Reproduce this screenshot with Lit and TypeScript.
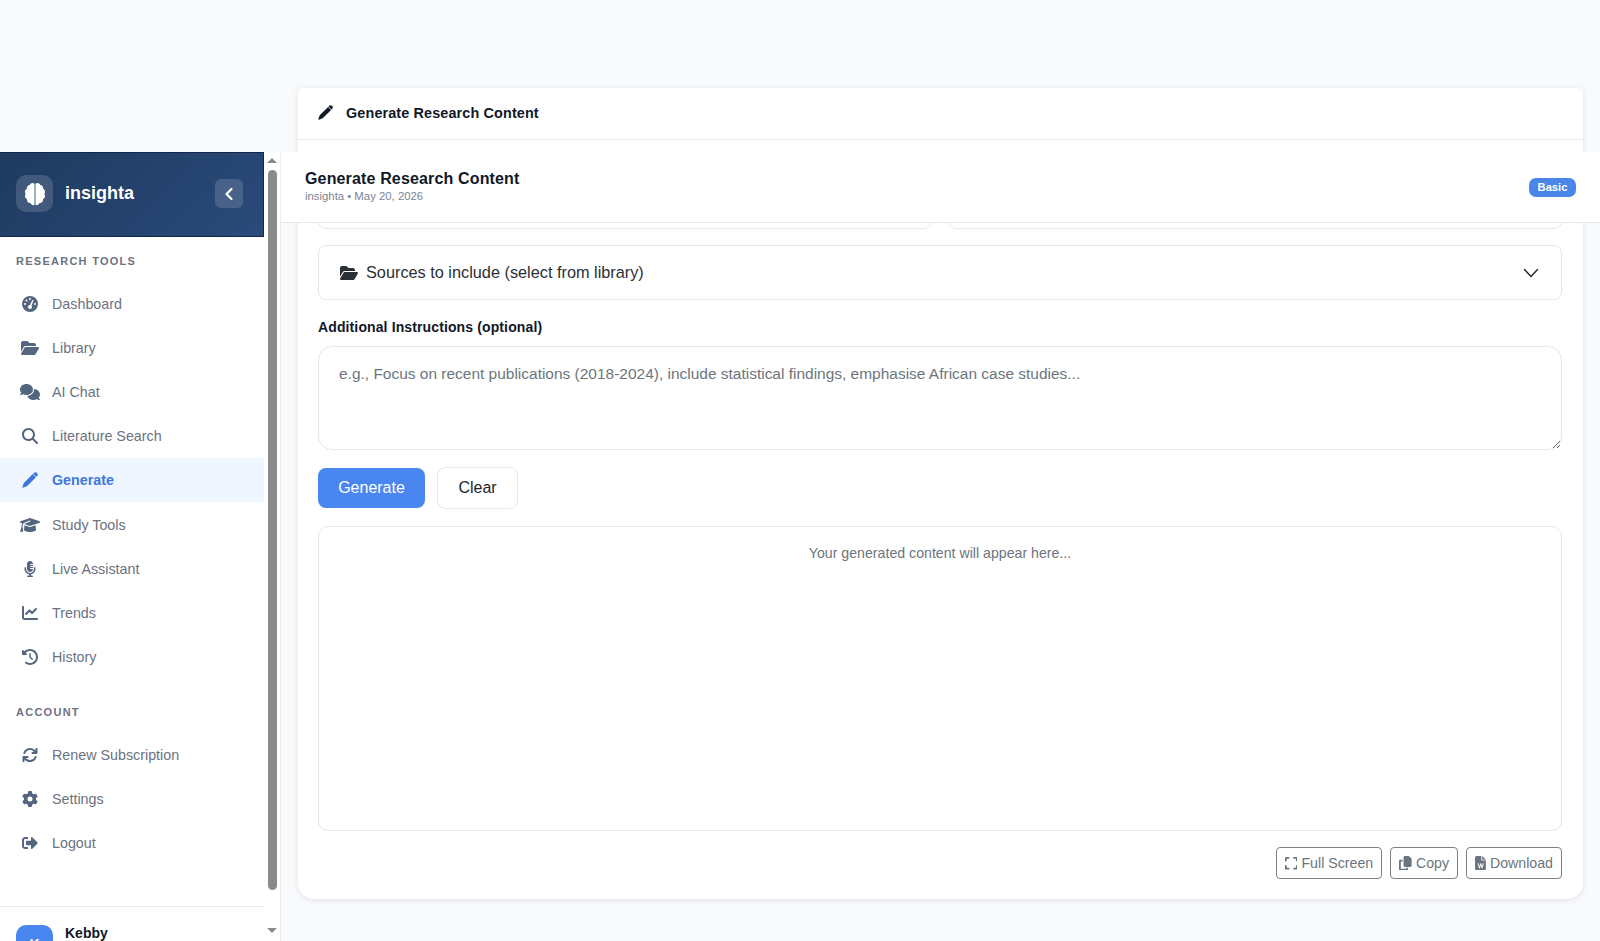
import { LitElement, html, css, svg } from "lit";
import { customElement } from "lit/decorators.js";

const P = {
  gauge: [512, "M0 256a256 256 0 1 1 512 0A256 256 0 1 1 0 256zM288 96a32 32 0 1 0 -64 0 32 32 0 1 0 64 0zM256 416c35.3 0 64-28.7 64-64c0-17.4-6.9-33.1-18.1-44.6L366 161.7c5.3-12.1-.2-26.3-12.3-31.6s-26.3 .2-31.6 12.3L257.9 288c-.6 0-1.3 0-1.9 0c-35.3 0-64 28.7-64 64s28.7 64 64 64zM176 144a32 32 0 1 0 -64 0 32 32 0 1 0 64 0zM96 288a32 32 0 1 0 0-64 32 32 0 1 0 0 64zm352-32a32 32 0 1 0 -64 0 32 32 0 1 0 64 0z"],
  folder: [576, "M88.7 223.8L0 375.8V96C0 60.7 28.7 32 64 32H181.5c17 0 33.3 6.7 45.3 18.7l26.5 26.5c12 12 28.3 18.7 45.3 18.7H416c35.3 0 64 28.7 64 64v32H144c-22.8 0-43.8 12.1-55.3 31.8zm27.6 16.1C122.1 230 132.6 224 144 224H544c11.5 0 22 6.1 27.7 16.1s5.7 22.2-.1 32.1l-112 192C453.9 474 443.4 480 432 480H32c-11.5 0-22-6.1-27.7-16.1s-5.7-22.2 .1-32.1l112-192z"],
  comments: [640, "M208 352c114.9 0 208-78.8 208-176S322.9 0 208 0S0 78.8 0 176c0 38.6 14.7 74.3 39.6 103.4c-3.5 9.4-8.7 17.7-14.2 24.7c-4.8 6.2-9.7 11-13.3 14.3c-1.8 1.6-3.3 2.9-4.3 3.7c-.5 .4-.9 .7-1.1 .8l-.2 .2 0 0 0 0C1 327.2-1.4 334.4 .8 340.9S9.1 352 16 352c21.8 0 43.8-5.6 62.1-12.5c9.2-3.5 17.8-7.4 25.3-11.4C134.1 343.3 169.8 352 208 352zM448 176c0 112.3-99.1 196.9-216.5 207C255.8 457.4 336.4 512 432 512c38.2 0 73.9-8.7 104.7-23.9c7.5 4 16 7.9 25.2 11.4c18.3 6.9 40.3 12.5 62.1 12.5c6.9 0 13.1-4.5 15.2-11.1c2.1-6.6-.2-13.8-5.8-17.9l0 0 0 0-.2-.2c-.2-.2-.6-.4-1.1-.8c-1-.8-2.5-2-4.3-3.7c-3.6-3.3-8.5-8.1-13.3-14.3c-5.5-7-10.7-15.4-14.2-24.7c24.9-29 39.6-64.7 39.6-103.4c0-92.8-84.9-168.9-192.6-175.5c.4 5.1 .6 10.3 .6 15.5z"],
  search: [512, "M416 208c0 45.9-14.9 88.3-40 122.7L502.6 457.4c12.5 12.5 12.5 32.8 0 45.3s-32.8 12.5-45.3 0L330.7 376c-34.4 25.2-76.8 40-122.7 40C93.1 416 0 322.9 0 208S93.1 0 208 0S416 93.1 416 208zM208 352a144 144 0 1 0 0-288 144 144 0 1 0 0 288z"],
  pen: [512, "M385 25c25-25 65-25 90 0l12 12c25 25 25 65 0 90l-28 28-102-102zM345 65l102 102L160 454 30 500c-12 4-22-6-18-18l46-130z"],
  cap: [640, "M320 32c-8.1 0-16.1 1.4-23.7 4.1L15.8 137.4C6.3 140.9 0 149.9 0 160s6.3 19.1 15.8 22.6l57.9 20.9C57.3 229.3 48 259.8 48 291.9v28.1c0 28.4-10.8 57.7-22.3 80.8c-6.5 13-13.9 25.8-22.5 37.6C0 442.7-.9 448.3 .9 453.4s6 8.9 11.2 10.2l64 16c4.2 1.1 8.7 .3 12.4-2s6.3-6.1 7.1-10.4c8.6-42.8 4.3-81.2-2.1-108.7C90.3 344.3 86 329.8 80 316.5V291.9c0-30.2 10.2-58.7 27.9-81.5c12.9-15.5 29.6-28 49.2-35.7l157-61.7c8.2-3.2 17.5 .8 20.7 9s-.8 17.5-9 20.7l-157 61.7c-12.4 4.9-23.3 12.4-32.2 21.6l159.6 57.6c7.6 2.7 15.6 4.1 23.7 4.1s16.1-1.4 23.7-4.1L624.2 182.6c9.5-3.4 15.8-12.5 15.8-22.6s-6.3-19.1-15.8-22.6L343.7 36.1C336.1 33.4 328.1 32 320 32zM128 408c0 35.3 86 72 192 72s192-36.7 192-72L496.7 262.6 354.5 314c-11.1 4-22.8 6-34.5 6s-23.5-2-34.5-6L143.3 262.6 128 408z"],
  mic: [384, "M96 96V256c0 53 43 96 96 96s96-43 96-96H208c-8.8 0-16-7.2-16-16s7.2-16 16-16h80V192H208c-8.8 0-16-7.2-16-16s7.2-16 16-16h80V128H208c-8.8 0-16-7.2-16-16s7.2-16 16-16h80c0-53-43-96-96-96S96 43 96 96zM320 240v16c0 70.7-57.3 128-128 128s-128-57.3-128-128V216c0-13.3-10.7-24-24-24s-24 10.7-24 24v40c0 89.1 66.2 162.7 152 174.4V464H120c-13.3 0-24 10.7-24 24s10.7 24 24 24h72 72c13.3 0 24-10.7 24-24s-10.7-24-24-24H216V430.4c85.8-11.7 152-85.3 152-174.4V216c0-13.3-10.7-24-24-24s-24 10.7-24 24v24z"],
  chart: [512, "M64 64c0-17.7-14.3-32-32-32S0 46.3 0 64V400c0 44.2 35.8 80 80 80H480c17.7 0 32-14.3 32-32s-14.3-32-32-32H80c-8.8 0-16-7.2-16-16V64zm406.6 86.6c12.5-12.5 12.5-32.8 0-45.3s-32.8-12.5-45.3 0L320 210.7l-57.4-57.4c-12.5-12.5-32.8-12.5-45.3 0l-112 112c-12.5 12.5-12.5 32.8 0 45.3s32.8 12.5 45.3 0L240 221.3l57.4 57.4c12.5 12.5 32.8 12.5 45.3 0l128-128z"],
  history: [512, "M75 75L41 41C25.9 25.9 0 36.6 0 57.9V168c0 13.3 10.7 24 24 24H134.1c21.4 0 32.1-25.9 17-41l-30.8-30.8C155 85.5 203 64 256 64c106 0 192 86 192 192s-86 192-192 192c-40.8 0-78.6-12.7-109.7-34.4c-14.5-10.1-34.4-6.6-44.6 7.9s-6.6 34.4 7.9 44.6C151.2 495 201.7 512 256 512c141.4 0 256-114.6 256-256S397.4 0 256 0C185.3 0 121.3 28.7 75 75zm181 53c-13.3 0-24 10.7-24 24V256c0 6.4 2.5 12.5 7 17l72 72c9.4 9.4 24.6 9.4 33.9 0s9.4-24.6 0-33.9l-65-65V152c0-13.3-10.7-24-24-24z"],
  sync: [512, "M105.1 202.6c7.7-21.8 20.2-42.3 37.8-59.8c62.5-62.5 163.8-62.5 226.3 0L386.3 160H336c-17.7 0-32 14.3-32 32s14.3 32 32 32H463.5c0 0 0 0 0 0h.4c17.7 0 32-14.3 32-32V64c0-17.7-14.3-32-32-32s-32 14.3-32 32v51.2L414.4 97.6c-87.5-87.5-229.3-87.5-316.8 0C73.2 122 55.6 150.7 44.8 181.4c-5.9 16.7 2.9 34.9 19.5 40.8s34.9-2.9 40.8-19.5zM39 289.3c-5 1.5-9.8 4.2-13.7 8.2c-4 4-6.7 8.8-8.1 14c-.3 1.2-.6 2.5-.8 3.8c-.3 1.7-.4 3.4-.4 5.1V448c0 17.7 14.3 32 32 32s32-14.3 32-32V396.9l17.6 17.5 0 0c87.5 87.4 229.3 87.4 316.7 0c24.4-24.4 42.1-53.1 52.9-83.7c5.9-16.7-2.9-34.9-19.5-40.8s-34.9 2.9-40.8 19.5c-7.7 21.8-20.2 42.3-37.8 59.8c-62.5 62.5-163.8 62.5-226.3 0l-.1-.1L125.6 352H176c17.7 0 32-14.3 32-32s-14.3-32-32-32H48.4c-1.6 0-3.2 .1-4.8 .3s-3.1 .5-4.6 1z"],
  gear: [512, "M495.9 166.6c3.2 8.7 .5 18.4-6.4 24.6l-43.3 39.4c1.1 8.3 1.7 16.8 1.7 25.4s-.6 17.1-1.7 25.4l43.3 39.4c6.9 6.2 9.6 15.9 6.4 24.6c-4.4 11.9-9.7 23.3-15.8 34.3l-4.7 8.1c-6.6 11-14 21.4-22.1 31.2c-5.9 7.2-15.7 9.6-24.5 6.8l-55.7-17.7c-13.4 10.3-28.2 18.9-44 25.4l-12.5 57.1c-2 9.1-9 16.3-18.2 17.8c-13.8 2.3-28 3.5-42.5 3.5s-28.7-1.2-42.5-3.5c-9.2-1.5-16.2-8.7-18.2-17.8l-12.5-57.1c-15.8-6.5-30.6-15.1-44-25.4L83.1 425.9c-8.8 2.8-18.6 .3-24.5-6.8c-8.1-9.8-15.5-20.2-22.1-31.2l-4.7-8.1c-6.1-11-11.4-22.4-15.8-34.3c-3.2-8.7-.5-18.4 6.4-24.6l43.3-39.4C64.6 273.1 64 264.6 64 256s.6-17.1 1.7-25.4L22.4 191.2c-6.9-6.2-9.6-15.9-6.4-24.6c4.4-11.9 9.7-23.3 15.8-34.3l4.7-8.1c6.6-11 14-21.4 22.1-31.2c5.9-7.2 15.7-9.6 24.5-6.8l55.7 17.7c13.4-10.3 28.2-18.9 44-25.4l12.5-57.1c2-9.1 9-16.3 18.2-17.8C227.3 1.2 241.5 0 256 0s28.7 1.2 42.5 3.5c9.2 1.5 16.2 8.7 18.2 17.8l12.5 57.1c15.8 6.5 30.6 15.1 44 25.4l55.7-17.7c8.8-2.8 18.6-.3 24.5 6.8c8.1 9.8 15.5 20.2 22.1 31.2l4.7 8.1c6.1 11 11.4 22.4 15.8 34.3zM256 336a80 80 0 1 0 0-160 80 80 0 1 0 0 160z"],
  logout: [512, "M497 273L329 441c-15 15-41 4.5-41-17v-96H152c-13.3 0-24-10.7-24-24v-96c0-13.3 10.7-24 24-24h136V88c0-21.4 25.9-32 41-17l168 168c9.3 9.4 9.3 24.6 0 34zM192 436v-40c0-6.6-5.4-12-12-12H96c-17.7 0-32-14.3-32-32V160c0-17.7 14.3-32 32-32h84c6.6 0 12-5.4 12-12V76c0-6.6-5.4-12-12-12H96c-53 0-96 43-96 96v192c0 53 43 96 96 96h84c6.6 0 12-5.4 12-12z"],
  expand: [448, "M32 32C14.3 32 0 46.3 0 64v96c0 17.7 14.3 32 32 32s32-14.3 32-32V96h64c17.7 0 32-14.3 32-32s-14.3-32-32-32H32zM64 352c0-17.7-14.3-32-32-32s-32 14.3-32 32v96c0 17.7 14.3 32 32 32h96c17.7 0 32-14.3 32-32s-14.3-32-32-32H64V352zM320 32c-17.7 0-32 14.3-32 32s14.3 32 32 32h64v64c0 17.7 14.3 32 32 32s32-14.3 32-32V64c0-17.7-14.3-32-32-32H320zM448 352c0-17.7-14.3-32-32-32s-32 14.3-32 32v64H320c-17.7 0-32 14.3-32 32s14.3 32 32 32h96c17.7 0 32-14.3 32-32V352z"],
  copy: [448, "M208 0H332.1c12.7 0 24.9 5.1 33.9 14.1l67.9 67.9c9 9 14.1 21.2 14.1 33.9V336c0 26.5-21.5 48-48 48H208c-26.5 0-48-21.5-48-48V48c0-26.5 21.5-48 48-48zM48 128h80v64H64V448H256V416h64v48c0 26.5-21.5 48-48 48H48c-26.5 0-48-21.5-48-48V176c0-26.5 21.5-48 48-48z"],
  word: [384, "M64 0C28.7 0 0 28.7 0 64V448c0 35.3 28.7 64 64 64H320c35.3 0 64-28.7 64-64V160H256c-17.7 0-32-14.3-32-32V0H64zM256 0V128H384L256 0zM96 256h34l28 118 32-118h28l32 118 28-118h34l-46 176h-32l-30-110-30 110h-32L96 256z"],
} as const;

type IconName = keyof typeof P;

const icon = (n: IconName) => {
  const [w, d] = P[n];
  return html`<svg class="fa" viewBox="0 0 ${w} 512" fill="currentColor" fill-rule="evenodd">${svg`<path d=${d}></path>`}</svg>`;
};

const research: [string, IconName][] = [
  ["Dashboard", "gauge"],
  ["Library", "folder"],
  ["AI Chat", "comments"],
  ["Literature Search", "search"],
  ["Generate", "pen"],
  ["Study Tools", "cap"],
  ["Live Assistant", "mic"],
  ["Trends", "chart"],
  ["History", "history"],
];
const account: [string, IconName][] = [
  ["Renew Subscription", "sync"],
  ["Settings", "gear"],
  ["Logout", "logout"],
];

@customElement("app-root")
export class AppRoot extends LitElement {
  static styles = css`
    :host {
      display: block;
      position: relative;
      height: 941px;
      overflow: hidden;
      background: #f9fafc;
      font-family: "Liberation Sans", Arial, sans-serif;
      color: #111827;
    }
    * { box-sizing: border-box; }
    .fa { display: block; height: 1em; width: auto; }

    .content { padding: 88px 17px 0 298px; }
    .card {
      height: 811px;
      background: #fff;
      border-radius: 6px 6px 16px 16px;
      box-shadow: 0 1px 6px rgba(30, 50, 90, 0.12);
      display: flex;
      flex-direction: column;
    }
    .card-head {
      height: 52px;
      flex: none;
      display: flex;
      align-items: center;
      gap: 13px;
      padding: 0 20px 2px;
      border-bottom: 1px solid #e9ebef;
      font-size: 14.4px;
      font-weight: 700;
      letter-spacing: 0.13px;
      color: #111827;
    }
    .card-head .fa { font-size: 15px; }
    .card-body {
      flex: 1;
      display: flex;
      flex-direction: column;
      padding: 0 21px 20px 20px;
    }
    .selects {
      display: grid;
      grid-template-columns: 1fr 1fr;
      gap: 16px;
      margin-top: 28px;
      height: 60.5px;
      flex: none;
    }
    .select { border: 1px solid #e5e7eb; border-radius: 8px; }
    .sources {
      flex: none;
      height: 55px;
      margin-top: 16.5px;
      border: 1px solid #e5e7eb;
      border-radius: 8px;
      display: flex;
      align-items: center;
      gap: 8px;
      padding: 0 22px 0 21px;
      font-size: 16.3px;
      color: #2b3035;
    }
    .sources .fa { font-size: 16px; }
    .sources span { flex: 1; }
    .chev { width: 16px; height: 16px; display: block; }
    .label {
      margin-top: 18px;
      height: 18px;
      line-height: 18px;
      font-size: 14px;
      font-weight: 700;
      letter-spacing: 0.12px;
      color: #111827;
    }
    textarea {
      flex: none;
      display: block;
      width: 100%;
      height: 104px;
      margin-top: 10px;
      padding: 15px 20px;
      border: 1px solid #e5e7eb;
      border-radius: 14px;
      font: 15.47px/1.5 "Liberation Sans", Arial, sans-serif;
      outline: none;
      background: #fff;
    }
    textarea::placeholder { color: #6c757d; opacity: 1; }
    .actions { display: flex; align-items: center; gap: 12px; margin-top: 17px; height: 42px; flex: none; }
    .btn {
      display: flex;
      align-items: center;
      justify-content: center;
      border-radius: 8px;
      font-size: 16px;
    }
    .primary { width: 107px; height: 40px; background: #4a86f0; color: #fff; }
    .ghost { width: 81px; height: 42px; background: #fff; border: 1px solid #e5e7eb; color: #212529; }
    .output {
      flex: 1;
      margin-top: 17px;
      border: 1px solid #e5e7eb;
      border-radius: 10px;
      padding: 17px 18px;
      text-align: center;
      font-size: 14.16px;
      line-height: 18px;
      color: #6c757d;
    }
    .tools { display: flex; justify-content: flex-end; gap: 8px; margin-top: 16px; flex: none; }
    .tool {
      height: 32px;
      display: flex;
      align-items: center;
      gap: 4px;
      padding: 0 8px;
      border: 1px solid #7d8187;
      border-radius: 4px;
      font-size: 14.2px;
      color: #6c757d;
      background: #fff;
    }
    .tool .fa { font-size: 14.5px; }

    .overlay {
      position: absolute;
      top: 152px;
      left: 0;
      right: 0;
      bottom: 0;
      pointer-events: none;
    }
    .topbar {
      position: absolute;
      top: 0;
      left: 280px;
      right: 0;
      height: 70.5px;
      padding: 0 24px 0 25px;
      display: flex;
      align-items: center;
      justify-content: space-between;
      background: #fff;
      border-bottom: 1px solid #e5e7eb;
    }
    .top-title { font-size: 16px; font-weight: 700; letter-spacing: 0.15px; line-height: 20px; color: #111827; }
    .top-sub { font-size: 11.35px; line-height: 13px; color: #7b8494; margin-top: 1px; margin-bottom: 1px; }
    .badge {
      width: 47px;
      height: 19px;
      display: flex;
      align-items: center;
      justify-content: center;
      background: #4a86e8;
      border-radius: 7px;
      color: #fff;
      font-size: 11.2px;
      font-weight: 700;
      margin-top: 1px;
    }

    .sidebar {
      position: absolute;
      top: 0;
      left: 0;
      bottom: 0;
      width: 281px;
      display: flex;
      background: #fff;
      border-right: 1px solid #eceef2;
      overflow: hidden;
    }
    .panel { width: 264px; flex: none; display: flex; flex-direction: column; }
    .brand {
      height: 85px;
      flex: none;
      display: flex;
      align-items: center;
      padding: 0 20px 2px 16px;
      background: linear-gradient(135deg, #1e3a5f, #2a4a7a);
      border: 1px solid #14274a;
      border-left: none;
    }
    .logo {
      width: 37px;
      height: 37px;
      border-radius: 10px;
      background: rgba(255, 255, 255, 0.15);
      display: flex;
      align-items: center;
      justify-content: center;
    }
    .logo svg { width: 22px; height: 24px; display: block; }
    .name { flex: 1; margin-left: 12px; font-size: 18px; font-weight: 700; color: #fff; }
    .collapse {
      width: 28px;
      height: 29px;
      border-radius: 6px;
      background: rgba(255, 255, 255, 0.15);
      display: flex;
      align-items: center;
      justify-content: center;
    }
    .collapse svg { width: 12px; height: 14px; display: block; }
    .heading {
      height: 14px;
      line-height: 14px;
      padding-left: 16px;
      font-size: 11px;
      font-weight: 700;
      letter-spacing: 1.26px;
      color: #6b7280;
    }
    .h1 { margin-top: 17px; }
    .h2 { margin-top: 26px; }
    .items { margin-top: 14px; }
    .item {
      height: 44.1px;
      display: flex;
      align-items: center;
      font-size: 14.3px;
      color: #6b7280;
    }
    .item.active { background: #eff6ff; color: #3f76dd; font-weight: 700; }
    .ico {
      width: 27px;
      margin-left: 16px;
      margin-right: 9px;
      display: flex;
      justify-content: center;
      font-size: 16px;
      color: #54657f;
    }
    .active .ico { color: #3f76dd; }
    .foot {
      margin-top: 41px;
      border-top: 1px solid #e9ebf0;
      padding: 18px 16px 0;
      display: flex;
      gap: 12px;
    }
    .avatar {
      width: 37px;
      height: 37px;
      flex: none;
      border-radius: 10px;
      background: #4a86f0;
      color: #fff;
      font-size: 14px;
      font-weight: 700;
      display: flex;
      align-items: center;
      justify-content: center;
    }
    .user { font-size: 14px; font-weight: 700; color: #111827; line-height: 16px; }

    .scroll {
      width: 16px;
      flex: none;
      display: flex;
      flex-direction: column;
      align-items: center;
      padding-top: 6px;
    }
    .arrow { width: 0; height: 0; border-left: 5px solid transparent; border-right: 5px solid transparent; }
    .up { border-bottom: 5px solid #8a8a8a; }
    .thumb { width: 9px; height: 720px; margin-top: 7px; border-radius: 5px; background: #8a8a8a; }
    .down { border-top: 5px solid #8a8a8a; margin-top: 38px; }
  `;

  private row = ([label, ic]: [string, IconName]) => html`
    <div class="item ${label === "Generate" ? "active" : ""}">
      <span class="ico">${icon(ic)}</span>${label}
    </div>
  `;

  render() {
    return html`
      <div class="content">
        <section class="card">
          <header class="card-head">${icon("pen")}Generate Research Content</header>
          <div class="card-body">
            <div class="selects"><div class="select"></div><div class="select"></div></div>
            <div class="sources">
              ${icon("folder")}
              <span>Sources to include (select from library)</span>
              <svg class="chev" viewBox="0 0 16 16" fill="none" stroke="#212529" stroke-width="1.4" stroke-linecap="round" stroke-linejoin="round"><path d="M1.5 4.5 8 11.5l6.5-7"></path></svg>
            </div>
            <div class="label">Additional Instructions (optional)</div>
            <textarea placeholder="e.g., Focus on recent publications (2018-2024), include statistical findings, emphasise African case studies..."></textarea>
            <div class="actions">
              <div class="btn primary">Generate</div>
              <div class="btn ghost">Clear</div>
            </div>
            <div class="output">Your generated content will appear here...</div>
            <div class="tools">
              <div class="tool">${icon("expand")}Full Screen</div>
              <div class="tool">${icon("copy")}Copy</div>
              <div class="tool">${icon("word")}Download</div>
            </div>
          </div>
        </section>
      </div>

      <div class="overlay">
        <div class="topbar">
          <div>
            <div class="top-title">Generate Research Content</div>
            <div class="top-sub">insighta • May 20, 2026</div>
          </div>
          <div class="badge">Basic</div>
        </div>
        <aside class="sidebar">
          <div class="panel">
            <div class="brand">
              <div class="logo">
                <svg viewBox="0 0 22 24">
                  <path fill="#fff" d="M10.4 1.6C8.8.3 6.4.9 5.8 2.9 3.8 3 2.6 4.7 3 6.6 1 7.6.4 10.2 1.6 12 .4 13.9 1 16.3 3 17.3c-.3 2.2 1.4 4 3.5 3.7.7 1.8 2.6 2.7 3.9 1.8z"></path>
                  <path fill="#fff" d="M11.6 1.6c1.6-1.3 4-.7 4.6 1.3 2 .1 3.2 1.8 2.8 3.7 2 1 2.6 3.6 1.4 5.4 1.2 1.9.6 4.3-1.4 5.3.3 2.2-1.4 4-3.5 3.7-.7 1.8-2.6 2.7-3.9 1.8z"></path>
                  <path stroke="#9fd3c7" stroke-width="1" d="M11 2v20.5"></path>
                </svg>
              </div>
              <div class="name">insighta</div>
              <div class="collapse">
                <svg viewBox="0 0 12 14" fill="none" stroke="#fff" stroke-width="2.2" stroke-linecap="round" stroke-linejoin="round"><path d="M8.5 2 3.5 7l5 5"></path></svg>
              </div>
            </div>
            <div class="heading h1">RESEARCH TOOLS</div>
            <div class="items">${research.map(this.row)}</div>
            <div class="heading h2">ACCOUNT</div>
            <div class="items">${account.map(this.row)}</div>
            <div class="foot">
              <div class="avatar">K</div>
              <div class="user">Kebby</div>
            </div>
          </div>
          <div class="scroll">
            <div class="arrow up"></div>
            <div class="thumb"></div>
            <div class="arrow down"></div>
          </div>
        </aside>
      </div>
    `;
  }
}
